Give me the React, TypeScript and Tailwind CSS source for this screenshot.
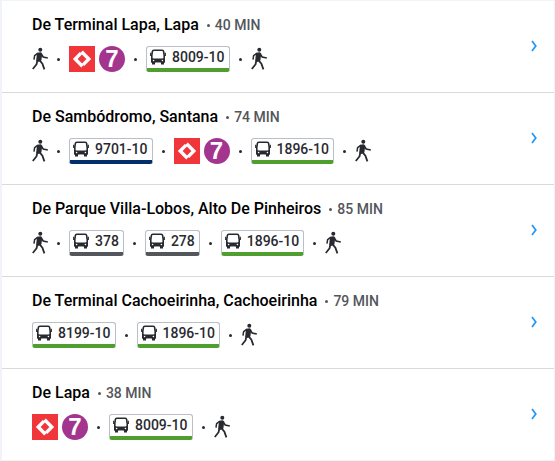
import { Fragment } from "react";

type Step =
  | { type: "walk" }
  | { type: "train" }
  | { type: "bus"; line: string; color: string };

const green = "border-b-[#509e2f]";
const blue = "border-b-[#002f6c]";
const gray = "border-b-[#53565a]";

const walk: Step = { type: "walk" };
const train: Step = { type: "train" };
const bus = (line: string, color: string): Step => ({ type: "bus", line, color });

const routes = [
  {
    from: "De Terminal Lapa, Lapa",
    time: "40 MIN",
    steps: [walk, train, bus("8009-10", green), walk],
  },
  {
    from: "De Sambódromo, Santana",
    time: "74 MIN",
    steps: [walk, bus("9701-10", blue), train, bus("1896-10", green), walk],
  },
  {
    from: "De Parque Villa-Lobos, Alto De Pinheiros",
    time: "85 MIN",
    steps: [walk, bus("378", gray), bus("278", gray), bus("1896-10", green), walk],
  },
  {
    from: "De Terminal Cachoeirinha, Cachoeirinha",
    time: "79 MIN",
    steps: [bus("8199-10", green), bus("1896-10", green), walk],
  },
  {
    from: "De Lapa",
    time: "38 MIN",
    steps: [train, bus("8009-10", green), walk],
  },
];

const WalkIcon = () => (
  <svg width="16" height="24" viewBox="0 0 16 24" fill="none" stroke="#292a30" aria-hidden="true">
    <circle cx="8.3" cy="2.8" r="2" fill="#292a30" stroke="none" />
    <path d="M5 5.8 8.8 5.2 10.2 6.6 9.4 13.4 6.2 15 4.2 13.4Z" fill="#292a30" stroke="none" />
    <path d="M5.6 6.4 2.6 8.6 2 12.6" strokeWidth="1.5" />
    <path d="M9.4 7.2 11.2 10 15.8 11" strokeWidth="1.6" />
    <path d="M5.4 13 4.6 17.2.8 22" strokeWidth="1.8" />
    <path d="M7.4 13.2 10.4 16.6 12.4 22.4" strokeWidth="1.8" />
  </svg>
);

const BusIcon = () => (
  <svg className="mt-0.5" width="16" height="16" viewBox="0 0 16 16" fill="none" aria-hidden="true">
    <path
      d="M1.8 12.8V6.3L2.4 2.4Q2.6 1.2 3.8 1.2H12.2Q13.4 1.2 13.6 2.4L14.2 6.3V12.8Z"
      stroke="#292a30"
      strokeWidth="1.6"
      strokeLinejoin="round"
    />
    <path d="M1 9Q4 9.6 8 9.6T15 9V13.6H14V15.4H11V13.6H5V15.4H2V13.6H1Z" fill="#292a30" />
    <path d="M.7 3.8V7M15.3 3.8V7" stroke="#292a30" strokeWidth="1.2" />
    <circle cx="3.6" cy="11.5" r=".8" fill="#fff" />
    <circle cx="12.4" cy="11.5" r=".8" fill="#fff" />
    <path d="M5.4 14.2H10.6" stroke="#fff" strokeWidth="1.2" />
  </svg>
);

const TrainIcon = () => (
  <svg width="26" height="26" viewBox="0 0 26 26" aria-hidden="true">
    <path d="M0 0H26V26H0Z" fill="#f0353b" />
    <path
      d="M12 7.1 6.2 13 13.4 20.2M14 18.9 19.8 13 12.6 5.8"
      fill="none"
      stroke="#fff"
      strokeWidth="3.4"
    />
  </svg>
);

const StepItem = ({ step }: { step: Step }) => {
  if (step.type === "walk") return <WalkIcon />;
  if (step.type === "train") {
    return (
      <span className="flex gap-1">
        <TrainIcon />
        <span className="flex h-[26px] w-[26px] items-center justify-center rounded-full bg-[#a3358f] font-['Liberation_Sans',sans-serif] text-2xl leading-none font-bold text-white">
          7
        </span>
      </span>
    );
  }
  return (
    <span
      className={`flex h-[26px] items-start gap-1.5 rounded-[3px] border border-b-4 border-[#b9bfc6] pr-1 pl-[3px] text-sm leading-5 font-medium text-[#292a30] ${step.color}`}
    >
      <BusIcon />
      {step.line}
    </span>
  );
};

const App = () => {
  return (
    <main className="bg-[#f0f4f9] pt-px pr-px pb-px pl-0.5 font-[Roboto,sans-serif]">
      <ul className="divide-y divide-[#d9d9da] bg-white">
        {routes.map((route) => (
          <li key={route.from}>
            <a href="#" className="flex items-center justify-between pt-3 pr-4 pb-3.5 pl-[30px]">
              <div className="pb-1.5">
                <h2 className="flex items-center gap-2 text-base leading-6 font-medium text-black">
                  {route.from}
                  <span className="flex items-center gap-[5px] text-sm text-[#53565a]">
                    <span className="h-[3px] w-[3px] rounded-full bg-[#53565a]" />
                    {route.time}
                  </span>
                </h2>
                <div className="mt-[9px] flex items-center gap-[9px]">
                  {route.steps.map((step, i) => (
                    <Fragment key={i}>
                      {i > 0 && <span className="h-[3px] w-[3px] rounded-full bg-[#292a30]" />}
                      <StepItem step={step} />
                    </Fragment>
                  ))}
                </div>
              </div>
              {/* arrow */}
              <svg width="8" height="12" viewBox="0 0 8 12" fill="none" aria-hidden="true">
                <path d="M2 1 5.8 6 2 11" stroke="#2196f3" strokeWidth="1.7" />
              </svg>
            </a>
          </li>
        ))}
      </ul>
    </main>
  );
};

export default App;
